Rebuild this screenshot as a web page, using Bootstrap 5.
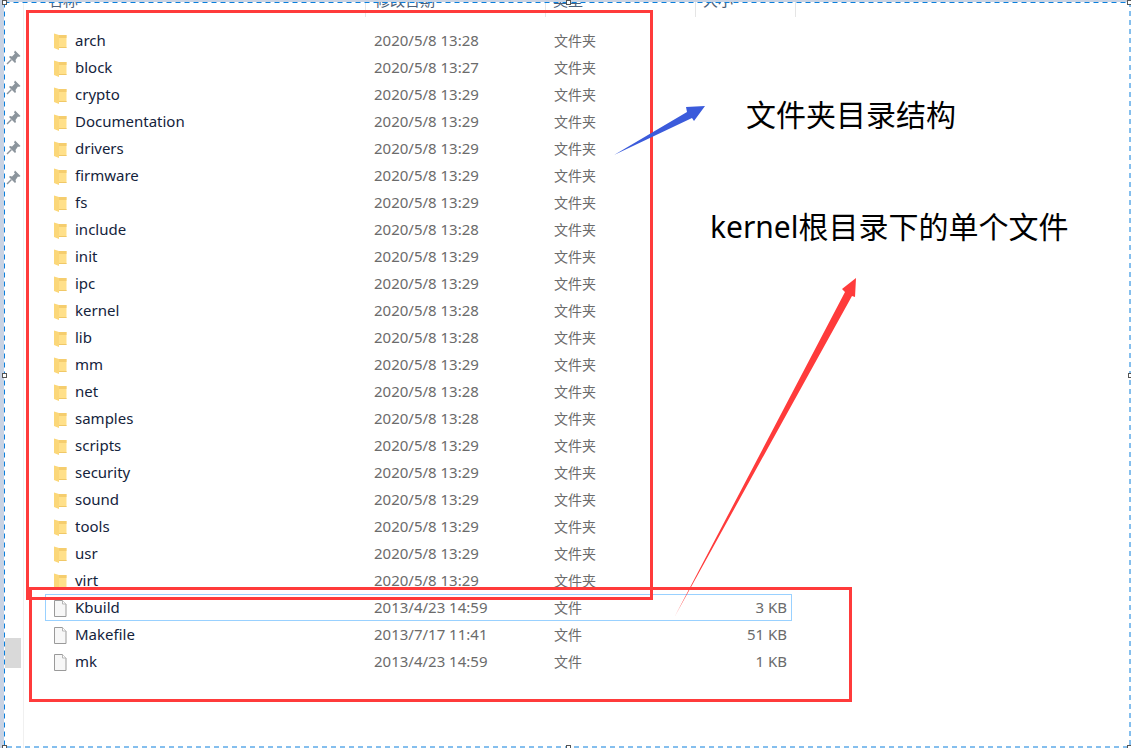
<!DOCTYPE html>
<html lang="zh">
<head>
    <meta charset="UTF-8">
    <title>kernel</title>
    <link href="https://cdn.jsdelivr.net/npm/bootstrap@5.3.0/dist/css/bootstrap.min.css" rel="stylesheet">
    <style>
        html, body { height: 100%; }
        body { background: #fff; overflow: hidden; font-family: "Noto Sans", "Noto Sans CJK SC", sans-serif; }
        .shot { width: 1131px; height: 748px; overflow: hidden; background: #fff; }
        .edge-top { height: 2px; background: #c9d3e3; }
        .edge-left { width: 4px; background: #c9d3e3; }
        .side { width: 20px; border-right: 1px solid #f0f0f0; padding-top: 41px; }
        .pin { width: 20px; height: 30px; padding-left: 2px; }
        .grey-tab { width: 16px; height: 30px; margin-left: 1px; margin-top: 445px; background: #d9d9d9; }
        .head-row { height: 15px; overflow: hidden; color: #4c607a; font-size: 15px; line-height: 20px; }
        .head-row span { margin-top: -12px; display: block; }
        .head-cell { height: 15px; border-right: 1px solid #e5e5e5; padding-left: 2px; }
        .file-list { padding-top: 10px; }
        .file-row { height: 27px; width: 747px; margin-left: 21px; border: 1px solid transparent; font-size: 15px; color: #14233c; }
        .file-row.picked { border-color: #99d1ff; }
        .ico { width: 16px; height: 18px; margin-left: 6px; flex: none; }
        .f-name { width: 299px; margin-left: 7px; flex: none; line-height: 25px; }
        .f-date { width: 180px; flex: none; color: #6b6b6b; font-size: 15px; }
        .f-type { width: 120px; flex: none; color: #6b6b6b; font-size: 14px; }
        .f-size { width: 113px; flex: none; color: #6b6b6b; text-align: right; font-size: 15px; }
        .overlay { left: 0; top: 0; pointer-events: none; }
        .note { color: #000; font-size: 30px; line-height: 40px; white-space: nowrap; }
        .note-a { left: 746px; top: 95px; }
        .note-b { left: 710px; top: 207px; }
    </style>
</head>
<body>
<svg width="0" height="0" class="position-absolute">
    <symbol id="folder" viewBox="0 0 16 18">
        <path d="M6 3h8.500v13H6z" fill="#ffe08a"/>
        <path d="M6 3h8.500v3H6z" fill="#f5cd6e"/>
        <path d="M2 1.500 7 3v15L2 16z" fill="#fbd779"/>
        <path d="M7 16h7.500v-1H7z" fill="#f0c868"/>
    </symbol>
    <symbol id="doc" viewBox="0 0 16 18">
        <path d="M2.500 1.500h8l3.500 3.500v12.500H2.500z" fill="#f7f7f7" stroke="#9a9a9a"/>
        <path d="M10.500 1.500v3.500H14" fill="#fff" stroke="#b5b5b5"/>
    </symbol>
    <symbol id="pinned" viewBox="0 0 16 16">
        <path d="M9 1.500 14.500 7 13 8l-1-.5L9.500 11l.5 2-1 1-6-6 1-1 2 .5L9 4.500 8 3.500z" fill="#8b949c"/>
        <path d="M5.500 10.500 1 15" stroke="#8b949c" stroke-width="1.500"/>
    </symbol>
</svg>

<div class="shot position-relative d-flex flex-column">
    <div class="edge-top"></div>
    <div class="d-flex flex-grow-1">
        <div class="edge-left"></div>
        <div class="side d-flex flex-column flex-shrink-0">
            <div class="pin"><svg width="16" height="16"><use href="#pinned"/></svg></div>
            <div class="pin"><svg width="16" height="16"><use href="#pinned"/></svg></div>
            <div class="pin"><svg width="16" height="16"><use href="#pinned"/></svg></div>
            <div class="pin"><svg width="16" height="16"><use href="#pinned"/></svg></div>
            <div class="pin"><svg width="16" height="16"><use href="#pinned"/></svg></div>
            <div class="grey-tab"></div>
        </div>
        <div class="flex-grow-1">
            <div class="head-row d-flex">
                <div class="head-cell" style="width:342px;padding-left:24px"><span>名称</span></div>
                <div class="head-cell" style="width:180px;padding-left:9px"><span>修改日期</span></div>
                <div class="head-cell" style="width:150px;padding-left:7px"><span>类型</span></div>
                <div class="head-cell" style="width:100px;padding-left:7px"><span>大小</span></div>
            </div>
            <div class="file-list">
                <div class="file-row d-flex align-items-center"><svg class="ico"><use href="#folder"/></svg><div class="f-name">arch</div><div class="f-date">2020/5/8 13:28</div><div class="f-type">文件夹</div></div>
                <div class="file-row d-flex align-items-center"><svg class="ico"><use href="#folder"/></svg><div class="f-name">block</div><div class="f-date">2020/5/8 13:27</div><div class="f-type">文件夹</div></div>
                <div class="file-row d-flex align-items-center"><svg class="ico"><use href="#folder"/></svg><div class="f-name">crypto</div><div class="f-date">2020/5/8 13:29</div><div class="f-type">文件夹</div></div>
                <div class="file-row d-flex align-items-center"><svg class="ico"><use href="#folder"/></svg><div class="f-name">Documentation</div><div class="f-date">2020/5/8 13:29</div><div class="f-type">文件夹</div></div>
                <div class="file-row d-flex align-items-center"><svg class="ico"><use href="#folder"/></svg><div class="f-name">drivers</div><div class="f-date">2020/5/8 13:29</div><div class="f-type">文件夹</div></div>
                <div class="file-row d-flex align-items-center"><svg class="ico"><use href="#folder"/></svg><div class="f-name">firmware</div><div class="f-date">2020/5/8 13:29</div><div class="f-type">文件夹</div></div>
                <div class="file-row d-flex align-items-center"><svg class="ico"><use href="#folder"/></svg><div class="f-name">fs</div><div class="f-date">2020/5/8 13:29</div><div class="f-type">文件夹</div></div>
                <div class="file-row d-flex align-items-center"><svg class="ico"><use href="#folder"/></svg><div class="f-name">include</div><div class="f-date">2020/5/8 13:28</div><div class="f-type">文件夹</div></div>
                <div class="file-row d-flex align-items-center"><svg class="ico"><use href="#folder"/></svg><div class="f-name">init</div><div class="f-date">2020/5/8 13:29</div><div class="f-type">文件夹</div></div>
                <div class="file-row d-flex align-items-center"><svg class="ico"><use href="#folder"/></svg><div class="f-name">ipc</div><div class="f-date">2020/5/8 13:29</div><div class="f-type">文件夹</div></div>
                <div class="file-row d-flex align-items-center"><svg class="ico"><use href="#folder"/></svg><div class="f-name">kernel</div><div class="f-date">2020/5/8 13:28</div><div class="f-type">文件夹</div></div>
                <div class="file-row d-flex align-items-center"><svg class="ico"><use href="#folder"/></svg><div class="f-name">lib</div><div class="f-date">2020/5/8 13:28</div><div class="f-type">文件夹</div></div>
                <div class="file-row d-flex align-items-center"><svg class="ico"><use href="#folder"/></svg><div class="f-name">mm</div><div class="f-date">2020/5/8 13:29</div><div class="f-type">文件夹</div></div>
                <div class="file-row d-flex align-items-center"><svg class="ico"><use href="#folder"/></svg><div class="f-name">net</div><div class="f-date">2020/5/8 13:28</div><div class="f-type">文件夹</div></div>
                <div class="file-row d-flex align-items-center"><svg class="ico"><use href="#folder"/></svg><div class="f-name">samples</div><div class="f-date">2020/5/8 13:28</div><div class="f-type">文件夹</div></div>
                <div class="file-row d-flex align-items-center"><svg class="ico"><use href="#folder"/></svg><div class="f-name">scripts</div><div class="f-date">2020/5/8 13:29</div><div class="f-type">文件夹</div></div>
                <div class="file-row d-flex align-items-center"><svg class="ico"><use href="#folder"/></svg><div class="f-name">security</div><div class="f-date">2020/5/8 13:29</div><div class="f-type">文件夹</div></div>
                <div class="file-row d-flex align-items-center"><svg class="ico"><use href="#folder"/></svg><div class="f-name">sound</div><div class="f-date">2020/5/8 13:29</div><div class="f-type">文件夹</div></div>
                <div class="file-row d-flex align-items-center"><svg class="ico"><use href="#folder"/></svg><div class="f-name">tools</div><div class="f-date">2020/5/8 13:29</div><div class="f-type">文件夹</div></div>
                <div class="file-row d-flex align-items-center"><svg class="ico"><use href="#folder"/></svg><div class="f-name">usr</div><div class="f-date">2020/5/8 13:29</div><div class="f-type">文件夹</div></div>
                <div class="file-row d-flex align-items-center"><svg class="ico"><use href="#folder"/></svg><div class="f-name">virt</div><div class="f-date">2020/5/8 13:29</div><div class="f-type">文件夹</div></div>
                <div class="file-row picked d-flex align-items-center"><svg class="ico"><use href="#doc"/></svg><div class="f-name">Kbuild</div><div class="f-date">2013/4/23 14:59</div><div class="f-type">文件</div><div class="f-size">3 KB</div></div>
                <div class="file-row d-flex align-items-center"><svg class="ico"><use href="#doc"/></svg><div class="f-name">Makefile</div><div class="f-date">2013/7/17 11:41</div><div class="f-type">文件</div><div class="f-size">51 KB</div></div>
                <div class="file-row d-flex align-items-center"><svg class="ico"><use href="#doc"/></svg><div class="f-name">mk</div><div class="f-date">2013/4/23 14:59</div><div class="f-type">文件</div><div class="f-size">1 KB</div></div>
            </div>
        </div>
    </div>

    <!-- annotation layer drawn over the screenshot -->
    <svg class="overlay position-absolute" width="1131" height="748" viewBox="0 0 1131 748">
        <rect x="27.500" y="11.500" width="624" height="587" fill="none" stroke="#ff3b3b" stroke-width="3"/>
        <rect x="30.500" y="588.500" width="820" height="112" fill="none" stroke="#ff3b3b" stroke-width="3"/>
        <path d="M614 155 687 112 686 107 705 106 694 121 692 118z" fill="#3b5bdb"/>
        <path d="M675 616 845 292 842 289 856 278 855 297 852 296z" fill="#ff3b3b"/>
        <rect x="4.500" y="2.500" width="1125.500" height="744.500" fill="none" stroke="#0a7fdc" stroke-width="1" stroke-dasharray="5 4"/>
        <g fill="#fff" stroke="#555">
            <rect x="2.500" y="0.500" width="4" height="4"/>
            <rect x="566.500" y="0.500" width="4" height="4"/>
            <rect x="1127.500" y="0.500" width="4" height="4"/>
            <rect x="2.500" y="373.500" width="4" height="4"/>
            <rect x="1128.500" y="373.500" width="4" height="4"/>
            <rect x="2.500" y="745.500" width="4" height="4"/>
            <rect x="566.500" y="745.500" width="4" height="4"/>
            <rect x="1127.500" y="745.500" width="4" height="4"/>
        </g>
    </svg>
    <div class="note note-a position-absolute">文件夹目录结构</div>
    <div class="note note-b position-absolute">kernel根目录下的单个文件</div>
</div>
<script src="https://cdn.jsdelivr.net/npm/bootstrap@5.3.0/dist/js/bootstrap.bundle.min.js"></script>
</body>
</html>
